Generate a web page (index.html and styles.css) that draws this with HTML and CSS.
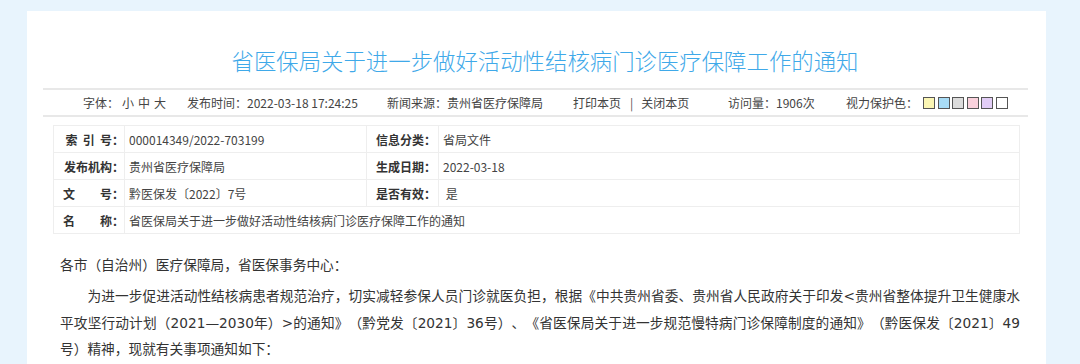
FILE: index.html
```html
<!DOCTYPE html>
<html lang="zh-CN">
<head>
	<meta charset="UTF-8">
	<title>省医保局关于进一步做好活动性结核病门诊医疗保障工作的通知</title>
	<link rel="stylesheet" href="styles.css">
</head>
<body>
	<div class="page">
		<h1 class="title">省医保局关于进一步做好活动性结核病门诊医疗保障工作的通知</h1>

		<div class="meta">
			<span class="m-font">字体：<a>小</a><a>中</a><a>大</a></span>
			<span class="m-time">发布时间：2022-03-18 17:24:25</span>
			<span class="m-src">新闻来源：贵州省医疗保障局</span>
			<span class="m-print"><a>打印本页</a><i>|</i><a>关闭本页</a></span>
			<span class="m-visit">访问量：1906次</span>
			<span class="m-eye">视力保护色：<b class="c1"></b><b class="c2"></b><b class="c3"></b><b class="c4"></b><b class="c5"></b><b class="c6"></b></span>
		</div>

		<table class="info">
			<tr>
				<th>索 引 号：</th>
				<td class="v1">000014349/2022-703199</td>
				<th class="h2">信息分类：</th>
				<td>省局文件</td>
			</tr>
			<tr>
				<th>发布机构：</th>
				<td class="v1">贵州省医疗保障局</td>
				<th class="h2">生成日期：</th>
				<td>2022-03-18</td>
			</tr>
			<tr>
				<th><span class="sp"><em>文</em><em>号：</em></span></th>
				<td class="v1">黔医保发〔2022〕7号</td>
				<th class="h2">是否有效：</th>
				<td>&nbsp;是</td>
			</tr>
			<tr>
				<th><span class="sp"><em>名</em><em>称：</em></span></th>
				<td colspan="3">省医保局关于进一步做好活动性结核病门诊医疗保障工作的通知</td>
			</tr>
		</table>

		<div class="content">
			<p class="salute">各市（自治州）医疗保障局，省医保事务中心：</p>
			<p class="para">为进一步促进活动性结核病患者规范治疗，切实减轻参保人员门诊就医负担，根据《中共贵州省委、贵州省人民政府关于印发&lt;贵州省整体提升卫生健康水平攻坚行动计划（2021—2030年）&gt;的通知》（黔党发〔2021〕36号）、《省医保局关于进一步规范慢特病门诊保障制度的通知》（黔医保发〔2021〕49号）精神，现就有关事项通知如下：</p>
		</div>
	</div>
</body>
</html>
```

FILE: styles.css
```css
*{margin: 0;padding: 0}
body {background: #e8f4fd;font-family: "Noto Sans CJK SC", sans-serif;color: #333;text-spacing-trim: space-all;}
a {color: #444;cursor: pointer;}
.page {width: 1019px;height: 400px;margin: 11px 0 0 27px;background: #fff;}
.title {height: 44px;padding: 33px 0 0 17px;font-size: 22.4px;font-weight: 300;line-height: 32px;color: #3fa9e9;text-align: center;}

/* 信息条 */
.meta {display: flex;align-items: center;height: 25px;margin: 0 18px 0 16px;padding-left: 40px;border-top: 2px solid #e8e8e8;border-bottom: 2px solid #e8e8e8;font-size: 12px;color: #444;white-space: nowrap;}
.meta > span {display: flex;align-items: center;}
.m-font {width: 104px;}
.m-font a {margin-left: 4px;}
.m-font a:first-child {margin-left: 3px;}
.m-time {width: 200px;}
.m-src {width: 186px;}
.m-print {width: 155px;}
.m-print i {font-style: normal;margin: 0 8px 0 9px;color: #555;}
.m-visit {width: 118px;}
.m-eye b {display: block;width: 10px;height: 10px;margin-left: 2.5px;border: 1px solid #555;}
.m-eye b.c1 {margin-left: 5px;background: #fbf6b4;}
.m-eye .c2 {background: #a8dcf6;}
.m-eye .c3 {background: #dcdcdc;}
.m-eye .c4 {background: #f9d1dc;}
.m-eye .c5 {background: #e2cdf6;}
.m-eye .c6 {background: #fff;}

/* 索引表 */
.info {width: 967px;margin: 8px 0 0 26px;border-collapse: collapse;border: 1px solid #e6e6e6;font-size: 12px;table-layout: fixed;}
.info th, .info td {height: 26px;border: 1px solid #eeeeee;white-space: nowrap;}
.info th {width: 61px;padding: 0 0 0 9px;text-align: right;font-weight: bold;color: #333;word-spacing: 2.5px;}
.info th.h2 {width: 62px;padding-left: 9px;text-align: left;}
.info td {padding-left: 4px;color: #444;text-align: left;}
.info td.v1 {width: 237px;}
.info .sp {display: flex;justify-content: space-between;}
.info .sp em {font-style: normal;}

/* 正文 */
.content {padding: 18px 26px 0 33px;font-family: "DejaVu Sans", "Noto Sans CJK SC", sans-serif;font-size: 13.7px;line-height: 26.5px;color: #333;}
.para {margin-top: 4.5px;text-indent: 2em;text-align: justify;}
```
